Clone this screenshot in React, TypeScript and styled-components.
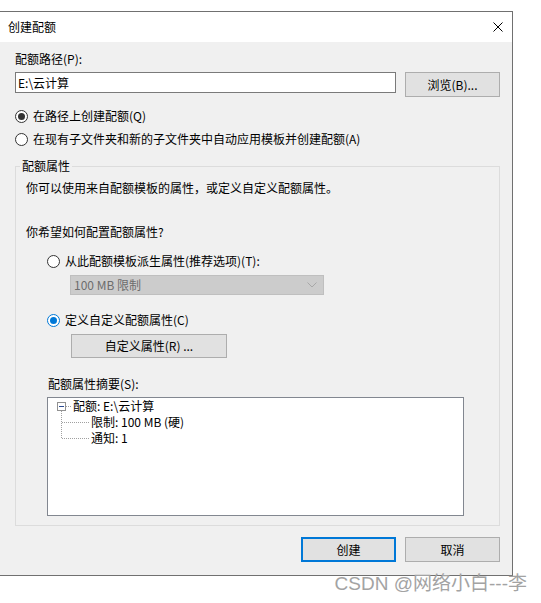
import React from 'react';
import styled, { createGlobalStyle } from 'styled-components';

const Global = createGlobalStyle`
  html, body { margin: 0; padding: 0; background: #ffffff; }
  body {
    font-family: "Noto Sans CJK SC", "Microsoft YaHei", sans-serif;
    font-size: 12px;
    color: #000;
  }
  * { box-sizing: border-box; }
`;

const Window = styled.div`
  margin-top: 11px;
  width: 513px;
  border: 1px solid #707070;
  border-left: none;
  display: flex;
  flex-direction: column;
`;

const TitleBar = styled.div`
  height: 30px;
  background: #ffffff;
  display: flex;
  align-items: center;
  justify-content: space-between;
  padding: 0 9px 0 8px;
`;

const TitleText = styled.span`
  font-size: 12px;
  line-height: 16px;
  color: #000;
`;

const Body = styled.div`
  background: #f0f0f0;
  padding: 9px 12px 13px 15px;
  display: flex;
  flex-direction: column;
`;

const Label = styled.div<{ $mt?: number; $ml?: number }>`
  line-height: 16px;
  height: 16px;
  white-space: nowrap;
  margin-top: ${p => p.$mt ?? 0}px;
  margin-left: ${p => p.$ml ?? 0}px;
`;

const PathRow = styled.div`
  display: flex;
  align-items: flex-start;
  gap: 9px;
  margin-top: 5px;
`;

const TextInput = styled.div`
  width: 381px;
  height: 21px;
  border: 1px solid #7a7a7a;
  background: #fff;
  padding: 0 2px;
  line-height: 19px;
  font-size: 12px;
`;

const Button = styled.button<{ $w: number; $h: number; $primary?: boolean; $ml?: number; $mt?: number }>`
  width: ${p => p.$w}px;
  height: ${p => p.$h}px;
  flex: none;
  margin: ${p => p.$mt ?? 0}px 0 0 ${p => p.$ml ?? 0}px;
  padding: 0;
  background: #e1e1e1;
  border: ${p => (p.$primary ? '2px solid #0078d7' : '1px solid #adadad')};
  font-family: inherit;
  font-size: 12px;
  line-height: 16px;
  color: #000;
  display: flex;
  align-items: center;
  justify-content: center;
`;

const RadioRow = styled.div<{ $mt?: number; $ml?: number }>`
  display: flex;
  align-items: center;
  gap: 5px;
  height: 16px;
  line-height: 16px;
  white-space: nowrap;
  margin-top: ${p => p.$mt ?? 0}px;
  margin-left: ${p => p.$ml ?? 0}px;
`;

const RadioCircle = styled.span<{ $checked?: boolean; $focus?: boolean }>`
  width: 13px;
  height: 13px;
  flex: none;
  border-radius: 50%;
  background: #fff;
  border: 1px solid ${p => (p.$focus ? '#0078d7' : '#333333')};
  display: flex;
  align-items: center;
  justify-content: center;
  &::after {
    content: '';
    display: ${p => (p.$checked ? 'block' : 'none')};
    width: 7px;
    height: 7px;
    border-radius: 50%;
    background: ${p => (p.$focus ? '#0078d7' : '#333333')};
  }
`;

const Group = styled.fieldset`
  margin: 11px 0 0;
  padding: 6px 10px 9px 10px;
  border: 1px solid #dcdcdc;
  min-width: 0;
  display: flex;
  flex-direction: column;
`;

const Legend = styled.legend`
  padding: 0 2px;
  margin-left: -6px;
  line-height: 16px;
  font-size: 12px;
`;

const Combo = styled.div`
  margin: 6px 0 0 44px;
  width: 254px;
  height: 20px;
  background: #cccccc;
  border: 1px solid #bfbfbf;
  color: #6d6d6d;
  display: flex;
  align-items: center;
  justify-content: space-between;
  padding: 0 6px 0 3px;
  line-height: 16px;
`;

const TreeBox = styled.div`
  margin: 5px 0 0 21px;
  width: 417px;
  height: 119px;
  background: #fff;
  border: 1px solid #828790;
  padding: 0 0 0 9px;
  display: flex;
  flex-direction: column;
`;

const TreeRow = styled.div<{ $indent?: number }>`
  display: flex;
  align-items: center;
  height: 16px;
  line-height: 16px;
  white-space: nowrap;
  padding-left: ${p => p.$indent ?? 0}px;
`;

const Expander = styled.span`
  width: 9px;
  height: 9px;
  flex: none;
  border: 1px solid #919191;
  background: #fff;
  display: flex;
  align-items: center;
  justify-content: center;
  &::after {
    content: '';
    width: 5px;
    height: 1px;
    background: #2b4a91;
  }
`;

const Dots = styled.span`
  width: 5px;
  flex: none;
  border-top: 1px dotted #a0a0a0;
  margin-right: 2px;
`;

const Connector = styled.span<{ $last?: boolean }>`
  position: relative;
  width: 30px;
  height: 16px;
  flex: none;
  &::before {
    content: '';
    position: absolute;
    left: 0;
    top: -3px;
    height: ${p => (p.$last ? '11px' : '19px')};
    border-left: 1px dotted #a0a0a0;
  }
  &::after {
    content: '';
    position: absolute;
    left: 1px;
    top: 8px;
    width: 27px;
    border-top: 1px dotted #a0a0a0;
  }
`;

const ButtonRow = styled.div`
  display: flex;
  justify-content: flex-end;
  gap: 9px;
  margin-top: 11px;
`;

const Watermark = styled.div`
  text-align: right;
  padding-right: 14px;
  font-family: "Liberation Sans", "Noto Sans CJK SC", sans-serif;
  font-size: 19px;
  line-height: 16px;
  color: #a3a3a3;
  white-space: nowrap;
`;

const CloseIcon = () => (
  <svg width="10" height="10" viewBox="0 0 10 10">
    <path d="M0.5 0.5 L9.5 9.5 M9.5 0.5 L0.5 9.5" stroke="#000" strokeWidth="1" fill="none" />
  </svg>
);

const Chevron = () => (
  <svg width="10" height="6" viewBox="0 0 10 6">
    <path d="M0.5 0.5 L5 5 L9.5 0.5" stroke="#a8a8a8" strokeWidth="1" fill="none" />
  </svg>
);

export default function App() {
  return (
    <>
      <Global />
      <Window>
        <TitleBar>
          <TitleText>创建配额</TitleText>
          <CloseIcon />
        </TitleBar>
        <Body>
          <Label>配额路径(P):</Label>
          <PathRow>
            <TextInput>E:\云计算</TextInput>
            <Button $w={95} $h={25}>浏览(B)...</Button>
          </PathRow>
          <RadioRow $mt={11}>
            <RadioCircle $checked />
            <span>在路径上创建配额(Q)</span>
          </RadioRow>
          <RadioRow $mt={7}>
            <RadioCircle />
            <span>在现有子文件夹和新的子文件夹中自动应用模板并创建配额(A)</span>
          </RadioRow>
          <Group>
            <Legend>配额属性</Legend>
            <Label>你可以使用来自配额模板的属性，或定义自定义配额属性。</Label>
            <Label $mt={28}>你希望如何配置配额属性?</Label>
            <RadioRow $mt={13} $ml={21}>
              <RadioCircle />
              <span>从此配额模板派生属性(推荐选项)(T):</span>
            </RadioRow>
            <Combo>
              <span>100 MB 限制</span>
              <Chevron />
            </Combo>
            <RadioRow $mt={17} $ml={21}>
              <RadioCircle $checked $focus />
              <span>定义自定义配额属性(C)</span>
            </RadioRow>
            <Button $w={156} $h={24} $ml={45} $mt={6}>自定义属性(R) ...</Button>
            <Label $mt={18} $ml={22}>配额属性摘要(S):</Label>
            <TreeBox>
              <TreeRow>
                <Expander />
                <Dots />
                <span>配额: E:\云计算</span>
              </TreeRow>
              <TreeRow $indent={4}>
                <Connector />
                <span>限制: 100 MB (硬)</span>
              </TreeRow>
              <TreeRow $indent={4}>
                <Connector $last />
                <span>通知: 1</span>
              </TreeRow>
            </TreeBox>
          </Group>
          <ButtonRow>
            <Button $w={95} $h={25} $primary>创建</Button>
            <Button $w={95} $h={25}>取消</Button>
          </ButtonRow>
        </Body>
      </Window>
      <Watermark>CSDN @网络小白---李</Watermark>
    </>
  );
}
